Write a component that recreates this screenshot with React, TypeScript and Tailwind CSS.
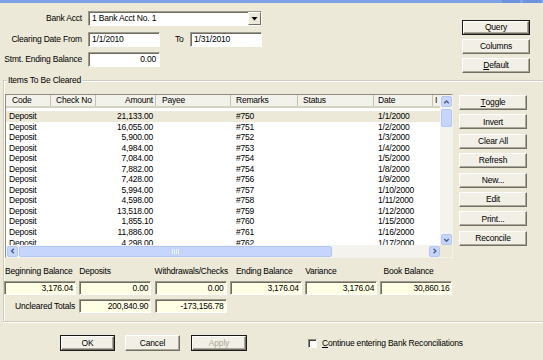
import React from "react";

const rows: [string, string, string][] = [
  ["21,133.00", "#750", "1/1/2000"],
  ["16,055.00", "#751", "1/2/2000"],
  ["5,900.00", "#752", "1/3/2000"],
  ["4,984.00", "#753", "1/4/2000"],
  ["7,084.00", "#754", "1/5/2000"],
  ["7,882.00", "#754", "1/8/2000"],
  ["7,428.00", "#756", "1/9/2000"],
  ["5,994.00", "#757", "1/10/2000"],
  ["4,598.00", "#758", "1/11/2000"],
  ["13,518.00", "#759", "1/12/2000"],
  ["1,855.10", "#760", "1/15/2000"],
  ["11,886.00", "#761", "1/16/2000"],
  ["4,298.00", "#762", "1/17/2000"],
];

function Btn({
  children,
  className = "",
  def = false,
  disabled = false,
}: {
  children: React.ReactNode;
  className?: string;
  def?: boolean;
  disabled?: boolean;
}) {
  return (
    <div className={`${def ? "border border-[#1A1A1A]" : ""} ${className}`}>
      <div
        className={`h-full w-full bg-[#F1EFE6] border border-t-white border-l-white border-r-[#716F64] border-b-[#716F64] shadow-[inset_-1px_-1px_0_#ACA899] flex items-center justify-center ${
          disabled ? "text-[#ACA899]" : "text-black"
        }`}
      >
        {children}
      </div>
    </div>
  );
}

function Field({ value, className = "" }: { value: string; className?: string }) {
  return (
    <div
      className={`h-[14px] bg-[#FFFFE6] border border-t-[#9D9A89] border-l-[#9D9A89] border-r-white border-b-white shadow-[inset_1px_1px_0_#6F6D63] flex items-center justify-end pr-[2px] ${className}`}
    >
      {value}
    </div>
  );
}

function Input({ value, className = "", right = false }: { value: string; className?: string; right?: boolean }) {
  return (
    <div
      className={`h-[15px] bg-white border border-t-[#9D9A89] border-l-[#9D9A89] border-r-white border-b-white shadow-[inset_1px_1px_0_#6F6D63] flex items-center ${
        right ? "justify-end pr-[3px]" : "pl-[3px]"
      } ${className}`}
    >
      {value}
    </div>
  );
}

function Chevron({ dir }: { dir: "up" | "down" | "left" | "right" }) {
  const pts =
    dir === "up"
      ? "2.5,6.5 5,4 7.5,6.5"
      : dir === "down"
      ? "2.5,4 5,6.5 7.5,4"
      : dir === "left"
      ? "6.5,2.5 4,5 6.5,7.5"
      : "4,2.5 6.5,5 4,7.5";
  return (
    <svg width="10" height="10" viewBox="0 0 10 10">
      <polyline points={pts} fill="none" stroke="#4D6185" strokeWidth="1.6" />
    </svg>
  );
}

function ScrollBtn({ dir }: { dir: "up" | "down" | "left" | "right" }) {
  return (
    <div className="w-[11px] h-[11px] rounded-[2px] bg-[#C6D5FB] border border-[#B4C6F2] flex items-center justify-center">
      <Chevron dir={dir} />
    </div>
  );
}

const U = ({ c }: { c: string }) => <span className="underline">{c}</span>;

export default function App() {
  return (
    <div className="w-[543px] h-[360px] overflow-hidden bg-[#ECE9D8] text-black font-['Liberation_Sans',Arial,sans-serif] text-[8.5px] tracking-[-0.2px] leading-none">
      {/* title bar remnant */}
      <div className="h-[3px] bg-[#7DA2E6] flex justify-end">
        <div className="w-[18px] h-full bg-[#6C93DE] mr-[3px]" />
        <div className="w-[18px] h-full bg-[#6C93DE] mr-[2px]" />
      </div>

      {/* top section */}
      <div className="flex h-[77px]">
        <div className="pt-[8px] flex flex-col">
          <div className="flex items-center h-[15px]">
            <span className="w-[82px] text-right">Bank Acct</span>
            <div className="ml-[6px] w-[174px] h-[15px] bg-white border border-t-[#9D9A89] border-l-[#9D9A89] border-r-white border-b-white shadow-[inset_1px_1px_0_#6F6D63] flex items-center pl-[3px]">
              <span className="flex-1">1 Bank Acct No. 1</span>
              <div className="w-[13px] h-[13px] bg-[#ECE9D8] border border-t-white border-l-white border-r-[#716F64] border-b-[#716F64] flex items-center justify-center">
                <svg width="7" height="4" viewBox="0 0 7 4">
                  <polygon points="0.5,0 6.5,0 3.5,3.5" fill="#000" />
                </svg>
              </div>
            </div>
          </div>
          <div className="flex items-center h-[15px] mt-[6px]">
            <span className="w-[82px] text-right">Clearing Date From</span>
            <Input value="1/1/2010" className="ml-[6px] w-[72px]" />
            <span className="ml-[15px] w-[15px]">To</span>
            <Input value="1/31/2010" className="w-[72px]" />
          </div>
          <div className="flex items-center h-[15px] mt-[5px]">
            <span className="w-[82px] text-right">Stmt. Ending Balance</span>
            <Input value="0.00" right className="ml-[6px] w-[72px]" />
          </div>
        </div>
        <div className="ml-auto mr-[13px] pt-[17px] flex flex-col gap-[4px]">
          <Btn def className="w-[68px] h-[15px]">Query</Btn>
          <Btn className="w-[68px] h-[15px]">Columns</Btn>
          <Btn className="w-[68px] h-[15px]">
            <U c="D" />efault
          </Btn>
        </div>
      </div>

      {/* group box */}
      <div className="relative ml-[3px] w-[560px] h-[242px] border-t border-l border-b border-[#D0CDBE] shadow-[inset_1px_1px_0_#FFFFFF,0_1px_0_#FFFFFF]">
        <span className="absolute left-[3px] top-[-5px] bg-[#ECE9D8] px-[1px]">Items To Be Cleared</span>
        <div className="pt-[13px] pl-[1px] flex">
          {/* list view */}
          <div className="w-[448px] h-[164px] border border-t-[#8F8C7D] border-l-[#8F8C7D] border-r-[#F2F1EA] border-b-[#F2F1EA] bg-white flex flex-col">
            <div className="flex flex-1 min-h-0">
              <div className="flex-1 min-w-0 overflow-hidden flex flex-col">
                {/* header */}
                <div className="h-[13px] shrink-0 flex bg-[#F3F2EA] border-b-[2px] border-[#D6D2C2] whitespace-nowrap">
                  <div className="w-[45px] shrink-0 pl-[6px] border-r border-[#C5C2B2] flex items-center">Code</div>
                  <div className="w-[45px] shrink-0 pl-[5px] border-r border-[#C5C2B2] flex items-center">Check No</div>
                  <div className="w-[60px] shrink-0 pr-[2px] border-r border-[#C5C2B2] flex items-center justify-end">Amount</div>
                  <div className="w-[75px] shrink-0 pl-[6px] border-r border-[#C5C2B2] flex items-center">Payee</div>
                  <div className="w-[67px] shrink-0 pl-[5px] border-r border-[#C5C2B2] flex items-center">Remarks</div>
                  <div className="w-[76px] shrink-0 pl-[5px] border-r border-[#C5C2B2] flex items-center">Status</div>
                  <div className="w-[59px] shrink-0 pl-[4px] border-r border-[#C5C2B2] flex items-center">Date</div>
                  <div className="w-[8px] shrink-0 pl-[2px] flex items-center">I</div>
                </div>
                {/* rows */}
                <div className="flex-1 min-h-0 overflow-hidden pt-[3px]">
                  {rows.map((r, i) => (
                    <div
                      key={i}
                      className={`h-[10.55px] flex items-center whitespace-nowrap ${i === 0 ? "bg-[#ECE9D8]" : ""}`}
                    >
                      <div className="w-[45px] shrink-0 pl-[3px]">Deposit</div>
                      <div className="w-[45px] shrink-0" />
                      <div className="w-[60px] shrink-0 pr-[3px] text-right">{r[0]}</div>
                      <div className="w-[75px] shrink-0" />
                      <div className="w-[67px] shrink-0 pl-[5px]">{r[1]}</div>
                      <div className="w-[76px] shrink-0" />
                      <div className="w-[59px] shrink-0 pl-[4px]">{r[2]}</div>
                    </div>
                  ))}
                </div>
              </div>
              {/* vertical scrollbar */}
              <div className="w-[12px] shrink-0 bg-[#F4F3EE] flex flex-col items-center pt-[1px]">
                <ScrollBtn dir="up" />
                <div className="mt-[2px] w-[11px] h-[18px] rounded-[2px] bg-[#C6D5FB] border border-[#B4C6F2]" />
                <div className="flex-1" />
                <ScrollBtn dir="down" />
              </div>
            </div>
            {/* horizontal scrollbar */}
            <div className="h-[12px] shrink-0 flex">
              <div className="flex-1 bg-[#F4F3EE] flex items-center pl-[1px]">
                <ScrollBtn dir="left" />
                <div className="ml-[1px] w-[313px] h-[11px] rounded-[2px] bg-[#C6D5FB] border border-[#B4C6F2] flex items-center justify-center gap-[1px]">
                  <div className="w-[1px] h-[5px] bg-[#EEF3FE]" />
                  <div className="w-[1px] h-[5px] bg-[#EEF3FE]" />
                  <div className="w-[1px] h-[5px] bg-[#EEF3FE]" />
                  <div className="w-[1px] h-[5px] bg-[#EEF3FE]" />
                </div>
                <div className="flex-1" />
                <ScrollBtn dir="right" />
              </div>
              <div className="w-[12px] bg-[#ECE9D8]" />
            </div>
          </div>

          {/* side buttons */}
          <div className="ml-[6px] pt-[1px] flex flex-col gap-[4.4px]">
            <Btn className="w-[68px] h-[15px]">
              <U c="T" />oggle
            </Btn>
            <Btn className="w-[68px] h-[15px]">Invert</Btn>
            <Btn className="w-[68px] h-[15px]">Clear All</Btn>
            <Btn className="w-[68px] h-[15px]">Refresh</Btn>
            <Btn className="w-[68px] h-[15px]">New...</Btn>
            <Btn className="w-[68px] h-[15px]">Edit</Btn>
            <Btn className="w-[68px] h-[15px]">Print...</Btn>
            <Btn className="w-[68px] h-[15px]">Reconcile</Btn>
          </div>
        </div>

        {/* balances */}
        <div className="mt-[9px] grid grid-cols-[72px_72px_72px_72px_72px_72px] gap-x-[3.3px] whitespace-nowrap">
          <span className="h-[10px] pl-[1px]">Beginning Balance</span>
          <span className="h-[10px]">Deposits</span>
          <span className="h-[10px]">Withdrawals/Checks</span>
          <span className="h-[10px] pl-[6px]">Ending Balance</span>
          <span className="h-[10px]">Variance</span>
          <span className="h-[10px] pl-[3px]">Book Balance</span>

          <Field value="3,176.04" className="mt-[4px]" />
          <Field value="0.00" className="mt-[4px]" />
          <Field value="0.00" className="mt-[4px]" />
          <Field value="3,176.04" className="mt-[4px]" />
          <Field value="3,176.04" className="mt-[4px]" />
          <Field value="30,860.16" className="mt-[4px]" />

          <span className="mt-[4px] h-[14px] flex items-center justify-end pr-[1px]">Uncleared Totals</span>
          <Field value="200,840.90" className="mt-[4px]" />
          <Field value="-173,156.78" className="mt-[4px]" />
        </div>
      </div>

      {/* bottom buttons */}
      <div className="flex items-center mt-[13px]">
        <Btn def className="ml-[60px] w-[55px] h-[16px]">OK</Btn>
        <Btn className="ml-[10px] w-[55px] h-[16px]">Cancel</Btn>
        <Btn def disabled className="ml-[11px] w-[56px] h-[16px]">Apply</Btn>
        <div className="ml-[61px] w-[9px] h-[9px] bg-white border border-t-[#8F8C7D] border-l-[#8F8C7D] border-r-white border-b-white shadow-[inset_1px_1px_0_#404040]" />
        <span className="ml-[5px]">
          <U c="C" />ontinue entering Bank Reconciliations
        </span>
      </div>
    </div>
  );
}
